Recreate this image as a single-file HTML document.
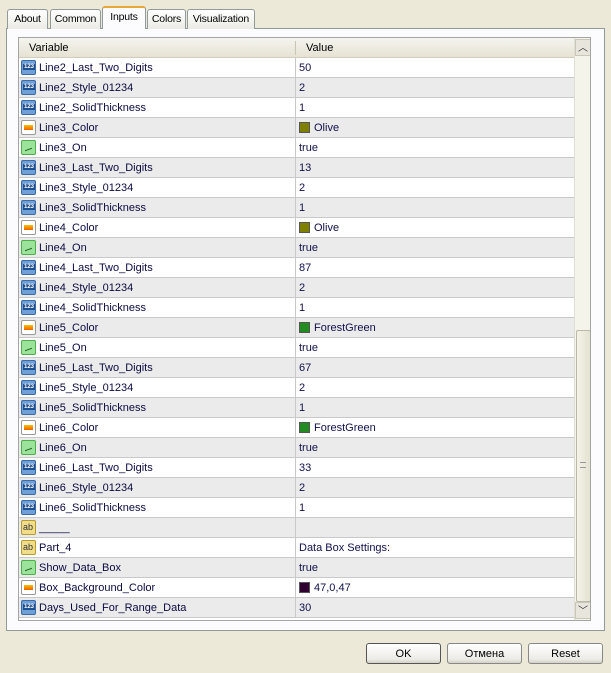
<!DOCTYPE html>
<html><head><meta charset="utf-8"><style>
*{box-sizing:border-box;margin:0;padding:0}
body{width:611px;height:673px;background:#ece9d8;font-family:"Liberation Sans",sans-serif;font-size:11px;position:relative;overflow:hidden;color:#000}
.tab{position:absolute;top:9px;height:20px;border:1px solid #919b9c;border-bottom:none;background:linear-gradient(#fff,#ecebe5);padding-top:3px;text-align:center;white-space:nowrap;font-size:10.5px;letter-spacing:-0.2px;border-radius:3px 3px 0 0;color:#000}
.panel{position:absolute;left:6px;top:28px;width:599px;height:603px;border:1px solid #919b9c;background:#fcfcfe}
.grid{position:absolute;left:18px;top:37px;width:573px;height:584px;border:1px solid #a5a5a5;background:#fff;overflow:hidden}
.hdr{position:absolute;left:0;top:0;width:555px;height:20px;background:linear-gradient(#f5f4ee,#e6e3d4);border-bottom:1px solid #d0cdbf}
.hdr span{position:absolute;top:4px}
.row{position:absolute;left:0;width:555px;height:20px;border-bottom:1px solid #c9c9c9}
.row .n{position:absolute;left:20px;top:4px;color:#0a0a40}
.row .v{position:absolute;left:280px;top:4px;color:#10104a}
.row .d{position:absolute;left:276px;top:0;width:1px;height:20px;background:#c9c9c9}
.ic{position:absolute;left:2px;top:2px;width:15px;height:15px;border-radius:2px}
.i123{background:#6fa0d8;border:1px solid #3a6aa8}
.i123:after{content:"123";position:absolute;left:1px;top:3px;font-size:6px;color:#fff;font-weight:bold;background:#1f4f8f;padding:0 1px}
.icol{background:#fff;border:1px solid #999}
.icol:after{content:"";position:absolute;left:2px;top:4px;width:9px;height:5px;background:linear-gradient(#f7c200,#f06000)}
.ion{background:#9be39b;border:1px solid #4caf4c}
.ion:after{content:"";position:absolute;left:3px;top:5px;width:7px;height:3px;border-bottom:1px solid #1a601a;transform:skewY(-20deg)}
.iab{background:#f1dc8a;border:1px solid #b59b30}
.iab:after{content:"ab";position:absolute;left:1px;top:1px;font-size:9px;color:#333}
.sw{display:inline-block;width:11px;height:11px;border:1px solid #555;vertical-align:-2px;margin-right:4px}
.sb{position:absolute;left:555px;top:0;width:17px;height:582px;background:#f5f4ea;border-left:1px solid #e0dfd3}
.btn{position:absolute;top:643px;height:21px;border:1px solid #555;border-radius:3px;background:linear-gradient(#fff,#ecebe6 80%,#d6d0c5);text-align:center;padding-top:4px}
</style></head><body>
<div class="panel"></div>
<div class="tab" style="left:7px;width:41px">About</div>
<div class="tab" style="left:50px;width:51px">Common</div>
<div class="tab" style="left:102px;top:6px;height:23px;width:44px;background:#fcfcfe;border-top:2px solid #e8a838">Inputs</div>
<div class="tab" style="left:147px;width:39px">Colors</div>
<div class="tab" style="left:187px;width:68px">Visualization</div>
<div class="grid">
<div class="hdr"><span style="left:10px">Variable</span><span style="left:276px;top:3px;height:14px;border-left:1px solid #c8c5b5"></span><span style="left:287px">Value</span></div>
<div id="rows"></div>
<div class="sb">
<div style="position:absolute;left:0;top:1px;width:16px;height:17px;background:#e8e6dc;border:1px solid #c9c7ba;text-align:center;font-size:10px;line-height:17px;color:#333">︿</div>
<div style="position:absolute;left:1px;top:292px;width:15px;height:272px;background:linear-gradient(90deg,#f4f3e8,#e4e2d0);border:1px solid #bab8a6;border-radius:2px"></div>
<div style="position:absolute;left:5px;top:424px;width:6px;height:6px;border-top:1px solid #999;border-bottom:1px solid #999"></div>
<div style="position:absolute;left:0;top:564px;width:16px;height:17px;background:#e8e6dc;border:1px solid #c9c7ba;text-align:center;font-size:10px;line-height:17px;color:#333">﹀</div>
</div>
</div>
<div class="btn" style="left:366px;width:75px">OK</div>
<div class="btn" style="left:447px;width:75px;border-color:#888">Отмена</div>
<div class="btn" style="left:528px;width:75px;border-color:#888">Reset</div>
<script>
var R=[["1","Line2_Last_Two_Digits","50"],["1","Line2_Style_01234","2"],["1","Line2_SolidThickness","1"],["c","Line3_Color","Olive","#808000"],["o","Line3_On","true"],["1","Line3_Last_Two_Digits","13"],["1","Line3_Style_01234","2"],["1","Line3_SolidThickness","1"],["c","Line4_Color","Olive","#808000"],["o","Line4_On","true"],["1","Line4_Last_Two_Digits","87"],["1","Line4_Style_01234","2"],["1","Line4_SolidThickness","1"],["c","Line5_Color","ForestGreen","#228b22"],["o","Line5_On","true"],["1","Line5_Last_Two_Digits","67"],["1","Line5_Style_01234","2"],["1","Line5_SolidThickness","1"],["c","Line6_Color","ForestGreen","#228b22"],["o","Line6_On","true"],["1","Line6_Last_Two_Digits","33"],["1","Line6_Style_01234","2"],["1","Line6_SolidThickness","1"],["a","_____",""],["a","Part_4","Data Box Settings:"],["o","Show_Data_Box","true"],["c","Box_Background_Color","47,0,47","#2f002f"],["1","Days_Used_For_Range_Data","30"]];
var m={"1":"i123","c":"icol","o":"ion","a":"iab"},h="";
R.forEach(function(r,i){h+='<div class="row" style="top:'+(20+i*20)+'px;background:'+(i%2?'#ebebeb':'#fff')+'"><div class="ic '+m[r[0]]+'"></div><span class="n">'+r[1]+'</span><div class="d"></div><span class="v">'+(r[3]?'<span class="sw" style="background:'+r[3]+'"></span>':'')+r[2]+'</span></div>';});
document.getElementById("rows").innerHTML=h;
</script>
</body></html>
